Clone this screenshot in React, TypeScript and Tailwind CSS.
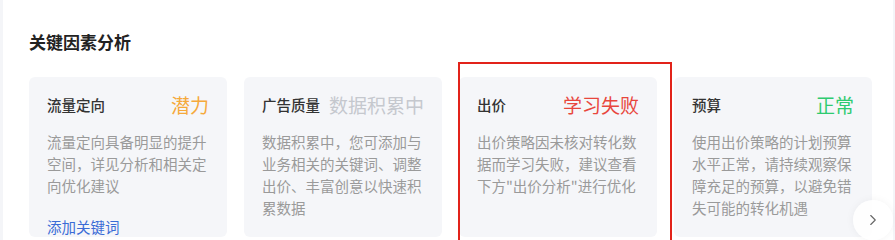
import { ChevronRight } from 'lucide-react';

type Factor = {
  title: string;
  status: string;
  statusClass: string;
  desc: string;
  link?: string;
};

const FACTORS: Factor[] = [
  {
    title: '流量定向',
    status: '潜力',
    statusClass: 'text-[#f5a93b]',
    desc: '流量定向具备明显的提升空间，详见分析和相关定向优化建议',
    link: '添加关键词',
  },
  {
    title: '广告质量',
    status: '数据积累中',
    statusClass: 'text-[#c5c8ce]',
    desc: '数据积累中，您可添加与业务相关的关键词、调整出价、丰富创意以快速积累数据',
  },
  {
    title: '出价',
    status: '学习失败',
    statusClass: 'text-[#e8463d]',
    desc: '出价策略因未核对转化数据而学习失败，建议查看下方"出价分析"进行优化',
  },
  {
    title: '预算',
    status: '正常',
    statusClass: 'text-[#2ecb70]',
    desc: '使用出价策略的计划预算水平正常，请持续观察保障充足的预算，以避免错失可能的转化机遇',
  },
];

function FactorCard({ title, status, statusClass, desc, link }: Factor) {
  return (
    <div className="w-[198px] h-[160px] shrink-0 rounded-md bg-[#f5f6f9] px-[18px] pt-[15px]">
      {/* Header */}
      <div className="flex h-[26px] items-center justify-between">
        <span className="text-[14.5px] font-medium text-[#333]">{title}</span>
        <span className={`text-[19px] leading-[26px] ${statusClass}`}>{status}</span>
      </div>
      <p className="mt-[13px] text-[14.5px] leading-[22px] text-[#9a9a9a]">{desc}</p>
      {link && (
        <div className="mt-[19px] text-[14.5px] leading-[22px] text-[#3b6cd6]">{link}</div>
      )}
    </div>
  );
}

export default function App() {
  return (
    <div
      className="relative flex h-[240px] w-[895px] overflow-hidden bg-white"
      style={{ fontFamily: '"Noto Sans CJK SC", "Noto Sans", sans-serif' }}
    >
      <div className="w-[3px] shrink-0 bg-[#f4f5f8]" />
      <div className="flex-1 pl-[26px]">
        <h2 className="pt-[30px] text-[17px] font-bold leading-6 text-[#222]">关键因素分析</h2>
        <div className="mt-[23px] flex gap-[17px]">
          {FACTORS.map((f) => (
            <FactorCard key={f.title} {...f} />
          ))}
        </div>
      </div>
      <div className="w-[2px] shrink-0 bg-[#f4f5f8]" />

      {/* annotation box */}
      <div className="pointer-events-none absolute left-[458px] top-[62px] h-[200px] w-[214px] border-2 border-[#e2231a]" />

      {/* carousel arrow */}
      <button className="absolute left-[853px] top-[200px] flex h-10 w-10 items-center justify-center rounded-full bg-white/90 text-[#666] shadow-[0_0_8px_rgba(0,0,0,0.05)]">
        <ChevronRight size={18} strokeWidth={1.5} />
      </button>
    </div>
  );
}
